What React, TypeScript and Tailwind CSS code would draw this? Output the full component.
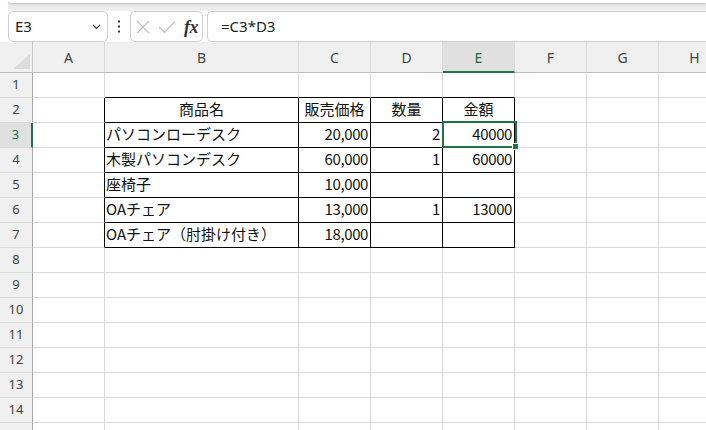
import React from 'react';

type Col = { k: string; w: string };
const COLS: Col[] = [
  { k: 'A', w: 'w-[72px]' },
  { k: 'B', w: 'w-[194px]' },
  { k: 'C', w: 'w-[72px]' },
  { k: 'D', w: 'w-[72px]' },
  { k: 'E', w: 'w-[72px]' },
  { k: 'F', w: 'w-[72px]' },
  { k: 'G', w: 'w-[72px]' },
  { k: 'H', w: 'w-[72px]' },
];

type Val = { t: string; a: 'l' | 'c' | 'r' };
const DATA: Record<number, Record<string, Val>> = {
  2: {
    B: { t: '商品名', a: 'c' },
    C: { t: '販売価格', a: 'c' },
    D: { t: '数量', a: 'c' },
    E: { t: '金額', a: 'c' },
  },
  3: {
    B: { t: 'パソコンローデスク', a: 'l' },
    C: { t: '20,000', a: 'r' },
    D: { t: '2', a: 'r' },
    E: { t: '40000', a: 'r' },
  },
  4: {
    B: { t: '木製パソコンデスク', a: 'l' },
    C: { t: '60,000', a: 'r' },
    D: { t: '1', a: 'r' },
    E: { t: '60000', a: 'r' },
  },
  5: {
    B: { t: '座椅子', a: 'l' },
    C: { t: '10,000', a: 'r' },
  },
  6: {
    B: { t: 'OAチェア', a: 'l' },
    C: { t: '13,000', a: 'r' },
    D: { t: '1', a: 'r' },
    E: { t: '13000', a: 'r' },
  },
  7: {
    B: { t: 'OAチェア（肘掛け付き）', a: 'l' },
    C: { t: '18,000', a: 'r' },
  },
};

const TABLE_COLS = ['B', 'C', 'D', 'E'];
const RIGHT_COLS = ['A', 'B', 'C', 'D', 'E'];

function Cell({ col, row }: { col: Col; row: number }) {
  const rightBlack = row >= 2 && row <= 7 && RIGHT_COLS.includes(col.k);
  const bottomBlack = row >= 1 && row <= 7 && TABLE_COLS.includes(col.k);
  const v = DATA[row]?.[col.k];
  const selected = row === 3 && col.k === 'E';
  const align = !v ? '' : v.a === 'l' ? 'text-left pl-[1px]' : v.a === 'c' ? 'text-center' : 'text-right pr-[2px]';
  return (
    <div
      className={`relative shrink-0 h-[25px] border-r border-b ${col.w} ${
        rightBlack ? 'border-r-black' : 'border-r-[#dadada]'
      } ${bottomBlack ? 'border-b-black' : 'border-b-[#dadada]'}`}
    >
      {v && (
        <div
          className={`whitespace-nowrap overflow-visible text-[15px] leading-[22px] text-[#111] font-['Noto_Sans_CJK_JP',sans-serif] ${align} ${
            v.a === 'r' ? 'tracking-[-0.4px]' : ''
          }`}
        >
          {v.t}
        </div>
      )}
      {selected && (
        <>
          <div className="absolute left-[-1px] top-[-2px] w-[75px] h-[27px] border-2 border-[#217346] z-10" />
          <div className="absolute left-[69px] top-[20px] w-[7px] h-[7px] bg-[#217346] border border-white z-20" />
        </>
      )}
    </div>
  );
}

function RowHeader({ row, label }: { row: number; label: boolean }) {
  const sel = row === 3;
  return (
    <div
      className={`shrink-0 w-[33px] h-[25px] border-b border-b-[#dadada] flex items-center justify-center text-[13px] font-['Noto_Sans',sans-serif] ${
        sel
          ? 'bg-[#e0e0e0] border-r-2 border-r-[#217346] text-[#1f6b40]'
          : 'bg-[#f0f0f0] border-r border-r-[#a8a8a8] text-[#444]'
      }`}
    >
      {label ? row : ''}
    </div>
  );
}

export default function App() {
  const rows = Array.from({ length: 15 }, (_, i) => i + 1);
  return (
    <div className="w-[706px] h-[430px] overflow-hidden bg-white font-['Noto_Sans',sans-serif]">
      {/* top band */}
      <div className="h-[11px] flex">
        <div className="w-[8px] bg-white" />
        <div className="flex-1 bg-gradient-to-b from-[#e2e2e2] to-[#f1f1f1]">
          <div className="h-[3px] bg-white rounded-bl-[8px] shadow-[0_1px_2px_rgba(0,0,0,0.18)]" />
        </div>
      </div>
      {/* formula bar */}
      <div className="h-[31px] flex items-start bg-white">
        <div className="ml-[8px] w-[100px] h-[31px] border border-[#d0d0d0] rounded-[5px] bg-white flex items-center pl-[6px] pr-[6px]">
          <span className="text-[15px] text-[#222] flex-1">E3</span>
          <svg width="9" height="6" viewBox="0 0 9 6" className="mt-[1px]">
            <polyline points="1,1 4.5,4.5 8,1" fill="none" stroke="#333" strokeWidth="1.2" />
          </svg>
        </div>
        <div className="w-[22px] h-[31px] flex items-center justify-center">
          <svg width="4" height="14" viewBox="0 0 4 14">
            <rect x="1" y="0.5" width="2" height="2" fill="#333" />
            <rect x="1" y="5.5" width="2" height="2" fill="#333" />
            <rect x="1" y="10.5" width="2" height="2" fill="#333" />
          </svg>
        </div>
        <div className="w-[73px] h-[31px] border border-[#d0d0d0] rounded-[5px] bg-white flex items-center">
          <svg width="14" height="14" viewBox="0 0 14 14" className="ml-[5px]">
            <path d="M1 1 L13 13 M13 1 L1 13" stroke="#c2c2c2" strokeWidth="1.2" fill="none" />
          </svg>
          <svg width="18" height="14" viewBox="0 0 18 14" className="ml-[8px]">
            <polyline points="1,7 6.5,12.5 17,1.5" stroke="#c2c2c2" strokeWidth="1.2" fill="none" />
          </svg>
          <span className="ml-[8px] font-['Liberation_Serif',serif] italic font-semibold text-[18px] leading-none text-[#333] tracking-[-0.5px]">
            fx
          </span>
        </div>
        <div className="ml-[4px] flex-1 h-[31px] border border-r-0 border-[#d0d0d0] rounded-l-[5px] bg-white flex items-center pl-[13px]">
          <span className="text-[15px] text-[#222]">=C3*D3</span>
        </div>
      </div>
      {/* column headers */}
      <div className="flex h-[31px] w-[800px]">
        <div className="relative shrink-0 w-[33px] h-[31px] bg-[#f0f0f0] border-r border-r-[#c8c8c8] border-b border-b-[#bdbdbd]">
          <svg width="17" height="15" viewBox="0 0 17 15" className="absolute left-[13px] top-[12px]">
            <polygon points="17,0 17,15 0,15" fill="#dcdcdc" />
          </svg>
        </div>
        {COLS.map((c) => {
          const sel = c.k === 'E';
          return (
            <div
              key={c.k}
              className={`shrink-0 h-[31px] border-r border-r-[#dadada] flex items-center justify-center text-[14px] ${c.w} ${
                sel
                  ? 'bg-[#e0e0e0] border-b-2 border-b-[#217346] text-[#1f6b40] pt-[1px]'
                  : 'bg-[#f0f0f0] border-b border-b-[#bdbdbd] text-[#444]'
              }`}
            >
              {c.k}
            </div>
          );
        })}
      </div>
      {/* rows */}
      {rows.map((r) => (
        <div key={r} className="flex w-[800px]">
          <RowHeader row={r} label={r <= 14} />
          {COLS.map((c) => (
            <Cell key={c.k} col={c} row={r} />
          ))}
        </div>
      ))}
    </div>
  );
}
